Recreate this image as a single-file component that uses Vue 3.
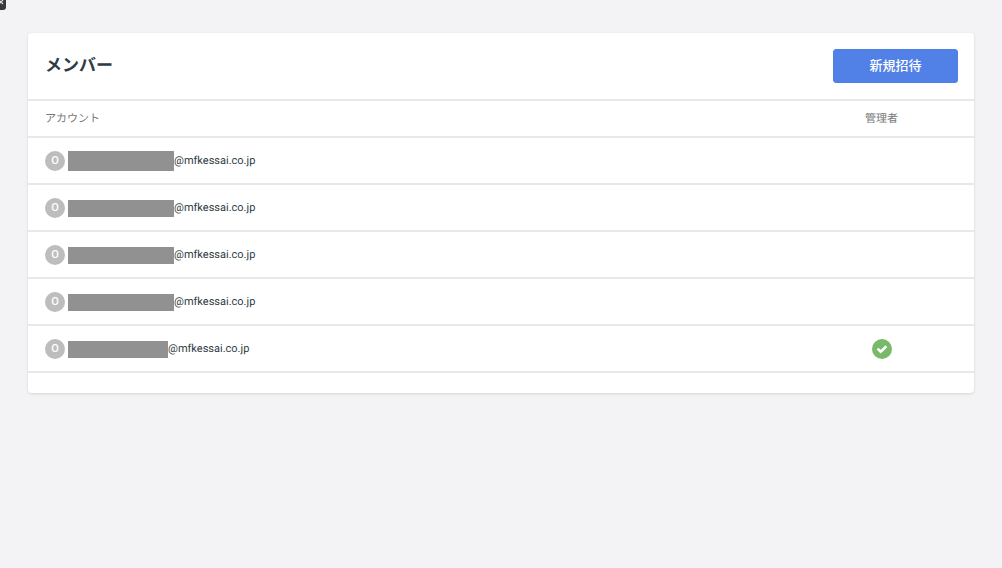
<script setup>
const members = [
  { id: 1, initial: 'O', mask: 'tall', domain: '@mfkessai.co.jp', admin: false },
  { id: 2, initial: 'O', mask: 'wide', domain: '@mfkessai.co.jp', admin: false },
  { id: 3, initial: 'O', mask: 'wide', domain: '@mfkessai.co.jp', admin: false },
  { id: 4, initial: 'O', mask: 'wide', domain: '@mfkessai.co.jp', admin: false },
  { id: 5, initial: 'O', mask: 'short', domain: '@mfkessai.co.jp', admin: true },
]
</script>

<template>
  <main class="page">
    <button class="collapse" type="button" aria-label="メニューを閉じる">
      <svg viewBox="0 0 6 10" aria-hidden="true">
        <path d="M-1 0L3 4M3 0L-1 4" />
      </svg>
    </button>
    <section class="card">
      <header class="card-header">
        <h1>メンバー</h1>
        <button class="invite" type="button">新規招待</button>
      </header>
      <table>
        <thead>
          <tr>
            <th scope="col">アカウント</th>
            <th scope="col" class="admin">管理者</th>
          </tr>
        </thead>
        <tbody>
          <tr v-for="member in members" :key="member.id">
            <td>
              <div class="account">
                <span class="avatar">{{ member.initial }}</span>
                <span class="mask" :class="member.mask"></span>
                <span>{{ member.domain }}</span>
              </div>
            </td>
            <td class="admin">
              <svg v-if="member.admin" class="check" viewBox="0 0 20 20" role="img" aria-label="管理者">
                <circle cx="10" cy="10" r="10" />
                <path d="M5.6 9.6L8.7 12.6L14.4 7.2" />
              </svg>
            </td>
          </tr>
        </tbody>
      </table>
    </section>
  </main>
</template>

<style>
body {
  background: #f3f3f5;
}
</style>

<style scoped>
.page {
  box-sizing: border-box;
  padding: 33px 28px;
  font-family: Roboto, "Noto Sans CJK JP", sans-serif;
  font-size: 11px;
  color: #303c43;
  text-rendering: geometricPrecision;
}

.collapse {
  position: absolute;
  top: 0;
  left: 0;
  width: 6px;
  height: 10px;
  padding: 0;
  border: 0;
  border-radius: 0 0 3px 0;
  background: #38393b;
}

.collapse svg {
  display: block;
  width: 6px;
  height: 10px;
  fill: none;
  stroke: #ddd;
  stroke-width: 1.2;
}

.card {
  padding-bottom: 20px;
  border-radius: 4px;
  background: #fff;
  box-shadow: 0 1px 3px rgba(0, 0, 0, 0.12);
}

.card-header {
  display: flex;
  align-items: center;
  justify-content: space-between;
  padding: 16px 16px 16px 17px;
  border-bottom: 2px solid #e8e8e8;
}

h1 {
  margin: 0;
  font-size: 17px;
  font-weight: 700;
  line-height: 24px;
}

.invite {
  box-sizing: border-box;
  width: 125px;
  height: 34px;
  padding: 0 0 2px;
  border: 1px solid #4f7ee5;
  border-radius: 3px;
  background: #5180e6;
  color: #fff;
  font: 500 13px/20px "Noto Sans CJK JP", sans-serif;
}

table {
  width: 100%;
  border-collapse: separate;
  border-spacing: 0;
  table-layout: fixed;
}

th,
td {
  box-sizing: border-box;
  padding: 0 0 0 17px;
  border-bottom: 2px solid #e8e8e8;
  text-align: left;
}

th {
  height: 37px;
  padding-bottom: 2px;
  color: #777;
  font-weight: 400;
}

td {
  height: 47px;
}

.admin {
  width: 185px;
  padding-left: 0;
  text-align: center;
}

.account {
  display: flex;
  align-items: center;
}

.avatar {
  width: 20px;
  height: 20px;
  margin-right: 3px;
  border-radius: 50%;
  background: #bdbdbd;
  color: #fff;
  font-weight: 500;
  line-height: 20px;
  text-align: center;
}

.mask {
  width: 106px;
  height: 20px;
  background: #919191;
}

.wide,
.short {
  height: 17px;
  margin-top: 2px;
}

.short {
  width: 100px;
}

.check {
  display: block;
  width: 20px;
  height: 20px;
  margin: 0 auto;
}

.check circle {
  fill: #78b96a;
}

.check path {
  fill: none;
  stroke: #fff;
  stroke-width: 2.6;
}
</style>
